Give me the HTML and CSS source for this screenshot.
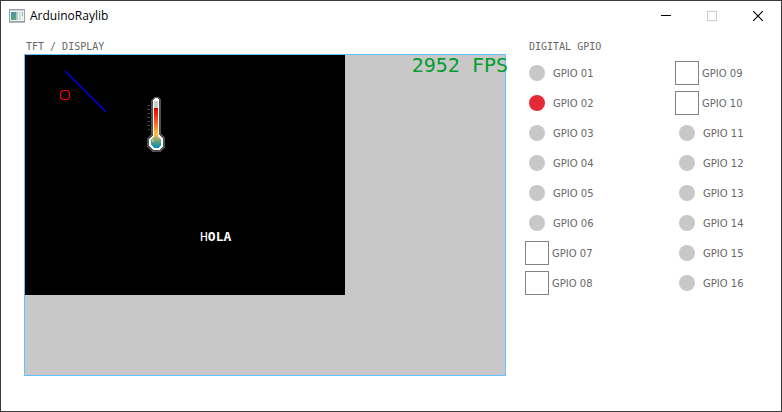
FILE: index.html
```html
<!DOCTYPE html>
<html lang="en">
<head>
<meta charset="utf-8">
<title>ArduinoRaylib</title>
<link rel="stylesheet" href="styles.css">
</head>
<body>
<div class="window">
  <header class="titlebar">
    <svg class="app-icon" width="16" height="14" viewBox="0 0 16 14" shape-rendering="crispEdges" aria-hidden="true">
      <defs><linearGradient id="pane" x1="0" y1="0" x2="0.6" y2="1"><stop offset="0" stop-color="#4d86b0"/><stop offset="1" stop-color="#58a878"/></linearGradient></defs>
      <rect x="0.5" y="0.5" width="15" height="12" fill="#eef0f1" stroke="#9aa0a4"/>
      <rect x="1" y="1" width="14" height="1" fill="#c9ced2"/>
      <rect x="2" y="3" width="5" height="8" fill="url(#pane)"/>
      <rect x="7" y="3" width="2" height="8" fill="#a9cdbb"/>
      <rect x="10" y="3" width="2" height="8" fill="#d5dadd"/>
      <rect x="13" y="3" width="1" height="4" fill="#8fbfa6"/>
      <rect x="0" y="13" width="16" height="1" fill="#b5b9bc"/>
    </svg>
    <h1 class="title">ArduinoRaylib</h1>
    <div class="window-buttons">
      <button class="window-button" type="button" aria-label="Minimize"><svg width="10" height="10" viewBox="0 0 10 10" shape-rendering="crispEdges"><path d="M0 4.5h10" stroke="#000"/></svg></button>
      <button class="window-button" type="button" aria-label="Maximize" disabled><svg width="10" height="10" viewBox="0 0 10 10" shape-rendering="crispEdges"><rect x="0.5" y="0.5" width="9" height="9" fill="none" stroke="#ccc"/></svg></button>
      <button class="window-button" type="button" aria-label="Close"><svg width="10" height="10" viewBox="0 0 10 10"><path d="M0 0l10 10M10 0L0 10" stroke="#000" stroke-width="1.2"/></svg></button>
    </div>
  </header>
  <main class="content">
    <section class="display">
      <h2 class="heading">TFT / DISPLAY</h2>
      <div class="panel">
        <div class="screen">
          <svg class="drawing" viewBox="0 0 320 240" aria-hidden="true">
            <defs><linearGradient id="heat" gradientUnits="userSpaceOnUse" x1="0" y1="53" x2="0" y2="93"><stop offset="0" stop-color="#e00000"/><stop offset="0.35" stop-color="#ff5a20"/><stop offset="0.65" stop-color="#ffc03c"/><stop offset="0.85" stop-color="#5a9c80"/><stop offset="1" stop-color="#0090c0"/></linearGradient></defs>
            <path d="M40 16L80.500 56.500" stroke="#00f" stroke-width="1.3" fill="none"/>
            <path d="M37.500 35.500h5l2 2v5l-2 2h-5l-2-2v-5z" stroke="#f00" stroke-width="1.1" fill="none"/>
            <g shape-rendering="crispEdges">
              <path d="M129 42h4l3 3v34l4 4v9l-5 5h-8l-5-5v-9l4-4V45z" fill="#505050"/>
              <path d="M130 43h2l2 2v35l4 4v7l-4 4h-6l-4-4v-7l4-4V45z" fill="#fff"/>
              <path d="M129 46h4v7h-4z" fill="#ccc"/>
              <path d="M129 53h4v28l3 4v5l-3 3h-4l-3-3v-5l3-4z" fill="url(#heat)"/>
              <path d="M129 53h4v1h-4z" fill="#b00000"/>
              <path d="M127 84h2v3h-2z" fill="#9cc4a8"/>
              <path d="M123 50.500h2M122 54.500h3M123 58.500h2M122 62.500h3M123 66.500h2M122 70.500h3M123 74.500h2" stroke="#484848"/>
            </g>
          </svg>
          <p class="message">H<b>OLA</b></p>
        </div>
        <output class="fps">2952 FPS</output>
      </div>
    </section>
    <section class="gpio">
      <h2 class="heading">DIGITAL GPIO</h2>
      <div class="pins">
        <div class="pin"><span class="led"></span>GPIO 01</div>
        <div class="pin"><span class="led led-on"></span>GPIO 02</div>
        <div class="pin"><span class="led"></span>GPIO 03</div>
        <div class="pin"><span class="led"></span>GPIO 04</div>
        <div class="pin"><span class="led"></span>GPIO 05</div>
        <div class="pin"><span class="led"></span>GPIO 06</div>
        <label class="pin"><input class="switch" type="checkbox">GPIO 07</label>
        <label class="pin"><input class="switch" type="checkbox">GPIO 08</label>
        <label class="pin"><input class="switch" type="checkbox">GPIO 09</label>
        <label class="pin"><input class="switch" type="checkbox">GPIO 10</label>
        <div class="pin"><span class="led"></span>GPIO 11</div>
        <div class="pin"><span class="led"></span>GPIO 12</div>
        <div class="pin"><span class="led"></span>GPIO 13</div>
        <div class="pin"><span class="led"></span>GPIO 14</div>
        <div class="pin"><span class="led"></span>GPIO 15</div>
        <div class="pin"><span class="led"></span>GPIO 16</div>
      </div>
    </section>
  </main>
</div>
</body>
</html>
```
FILE: styles.css
```css
* {
  box-sizing: border-box;
}

body {
  margin: 0;
  background: #fff;
  color: #686868;
  font-family: "DejaVu Sans", sans-serif;
  font-size: 10px;
}

.window {
  min-height: 100vh;
  border: 1px solid #3a393b;
}

.titlebar {
  display: flex;
  align-items: center;
  height: 29px;
  padding-left: 8px;
  gap: 5px;
}

.app-icon {
  flex: none;
}

.title {
  flex: 1;
  margin: 0;
  color: #000;
  font: 12px/16px "Open Sans", sans-serif;
}

.window-buttons {
  display: flex;
}

.window-button {
  display: flex;
  align-items: center;
  justify-content: center;
  width: 46px;
  height: 29px;
  padding: 0;
  border: 0;
  background: none;
}

.content {
  display: flex;
  gap: 19px;
  padding: 9px 0 0 23px;
}

.heading {
  margin: 0;
  padding-left: 2px;
  font: 10px/15px "DejaVu Sans Mono", monospace;
}

.panel {
  position: relative;
  height: 322px;
  width: 482px;
  border: 1px solid #66bfff;
  background: #c8c8c8;
}

.screen {
  position: relative;
  width: 320px;
  height: 240px;
  background: #000;
}

.drawing {
  display: block;
}

.message {
  position: absolute;
  left: 175px;
  top: 174px;
  margin: 0;
  color: #fff;
  font: 13px/15px "DejaVu Sans Mono", monospace;
}

.fps {
  position: absolute;
  top: -2px;
  right: -3px;
  color: #009e2f;
  font: 20px/24px "DejaVu Sans Mono", monospace;
}

.gpio {
  flex: 1;
  min-width: 0;
}

.gpio .heading {
  padding-left: 4px;
}

.pins {
  display: grid;
  grid-template-rows: repeat(8, 30px);
  grid-template-columns: 150px minmax(0, 1fr);
  grid-auto-flow: column;
  padding-top: 4px;
}

.pin {
  display: flex;
  align-items: center;
  gap: 3px;
}

.led {
  width: 16px;
  height: 16px;
  margin: 0 5px 0 4px;
  border-radius: 50%;
  background: #c8c8c8;
}

.led-on {
  background: #e62937;
}

.switch {
  appearance: none;
  width: 24px;
  height: 24px;
  margin: 0;
  border: 1px solid #838383;
  background: #fff;
}

.switch:checked {
  background: #838383;
}
```
